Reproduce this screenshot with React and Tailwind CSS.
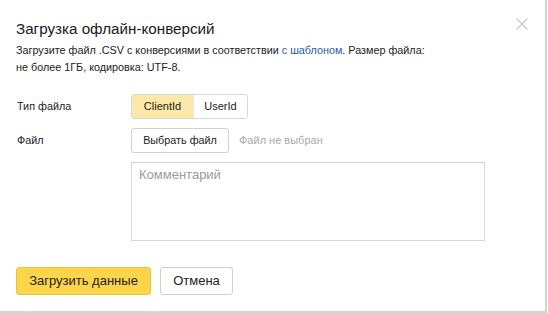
import React from "react";

export default function App() {
  return (
    <div className="w-[548px] h-[313px] bg-white overflow-hidden" style={{ fontFamily: '"Liberation Sans", Arial, sans-serif' }}>
      <div className="relative w-[547px] h-[313px] border-r-2 border-b-2 border-[#d4d4d4] bg-white pl-4 pt-[19px]">
        <div className="text-[15.2px] leading-[20px] text-[#1a1a1a]">Загрузка офлайн-конверсий</div>
        <button className="absolute left-[516px] top-[18px] w-[12px] h-[12px] text-[#c8c8c8]">
          <svg viewBox="0 0 12 12" width="12" height="12" fill="none" stroke="currentColor" strokeWidth="1.2">
            <path d="M0.5 0.5 L11.5 11.5 M11.5 0.5 L0.5 11.5" />
          </svg>
        </button>
        <div className="mt-[3px] text-[10.8px] leading-[17px] text-[#222]">
          Загрузите файл .CSV с конверсиями в соответствии <span className="text-[#2a5ca8]">с шаблоном</span>. Размер файла:
          <br />
          не более 1ГБ, кодировка: UTF-8.
        </div>
        <div className="mt-[18px] flex items-center">
          <div className="w-[115px] text-[10.8px] text-[#222] pl-px">Тип файла</div>
          <div className="flex h-[25px] rounded-[3px] border border-[#d8d8d8] overflow-hidden text-[11px] text-[#222]">
            <div className="w-[61px] flex items-center justify-center bg-[#fce8a8]">ClientId</div>
            <div className="w-[54px] flex items-center justify-center bg-white border-l border-[#e6e6e6]">UserId</div>
          </div>
        </div>
        <div className="mt-[9px] flex items-center">
          <div className="w-[115px] text-[10.8px] text-[#222] pl-px">Файл</div>
          <div className="w-[98px] h-[25px] rounded-[3px] border border-[#d0d0d0] flex items-center justify-center text-[10.8px] text-[#222] bg-white">Выбрать файл</div>
          <div className="ml-[10px] text-[11px] text-[#aaaaaa]">Файл не выбран</div>
        </div>
        <div className="mt-[9px] ml-[115px] w-[354px] h-[79px] border border-[#d6d6d6] px-[7px] pt-[4px] text-[13px] leading-[16px] text-[#9a9a9a]">
          Комментарий
        </div>
        <div className="mt-[26px] flex items-center gap-[9px]">
          <div className="w-[135px] h-[28px] rounded-[3px] bg-[#fdd54b] border border-[#e9c43c] flex items-center justify-center text-[13px] text-[#222]">Загрузить данные</div>
          <div className="w-[73px] h-[28px] rounded-[3px] bg-white border border-[#d0d0d0] flex items-center justify-center text-[13px] text-[#222]">Отмена</div>
        </div>
      </div>
    </div>
  );
}
